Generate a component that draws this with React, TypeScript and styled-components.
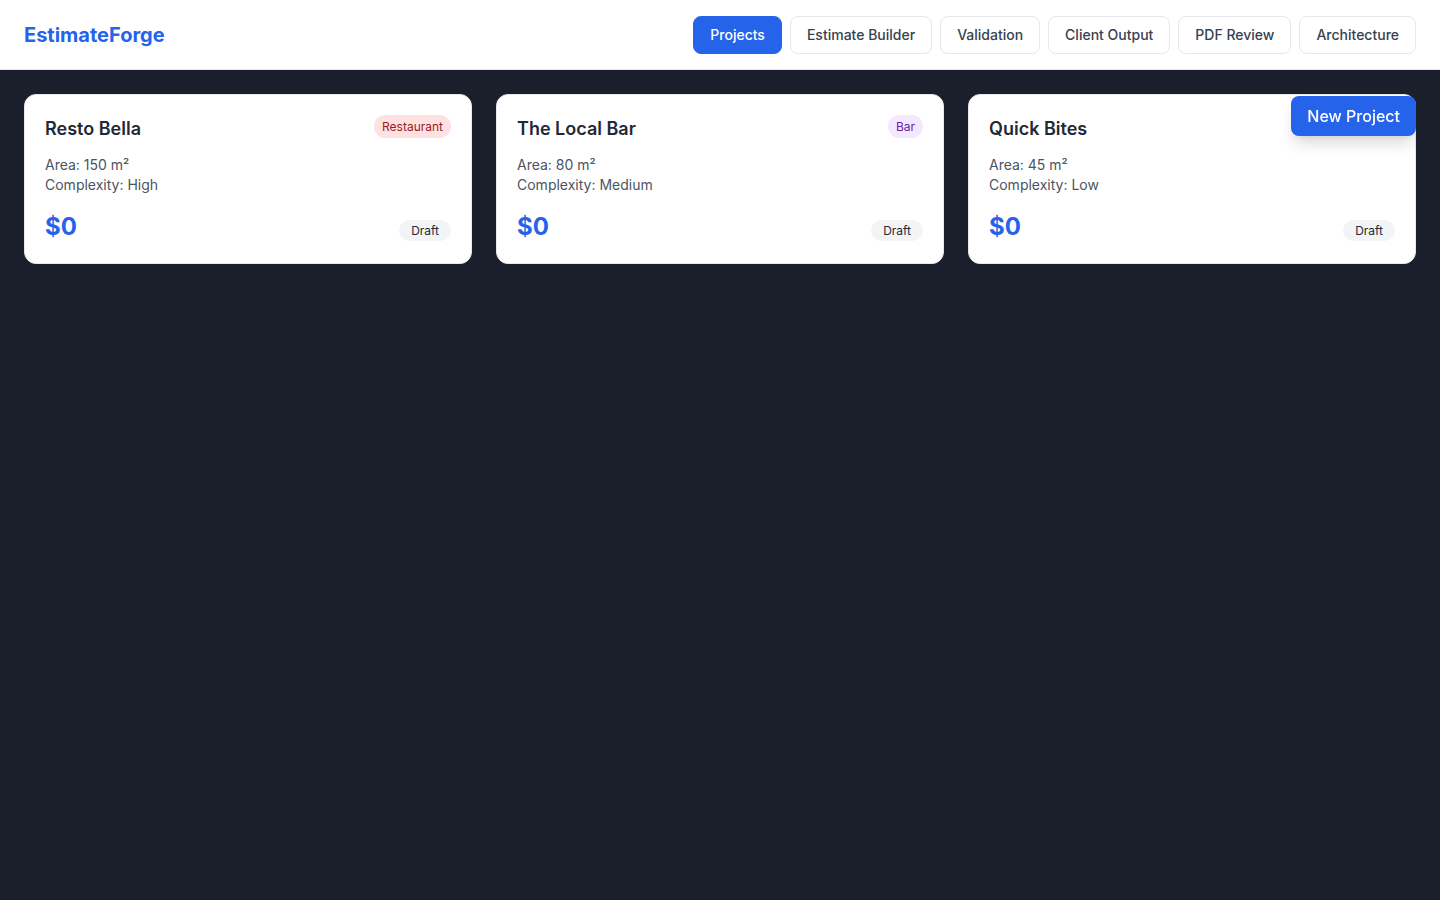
import React from 'react';
import styled, { createGlobalStyle } from 'styled-components';

const GlobalStyle = createGlobalStyle`
  html, body {
    margin: 0;
    padding: 0;
    background-color: #1b1f2c;
    font-family: Inter, "Noto Sans", sans-serif;
    -webkit-font-smoothing: antialiased;
  }
  #root {
    min-height: 100vh;
  }
  * {
    box-sizing: border-box;
  }
`;

const Page = styled.div`
  min-height: 100vh;
  background-color: #1b1f2c;
`;

const Header = styled.header`
  height: 70px;
  background: #ffffff;
  display: flex;
  align-items: center;
  justify-content: space-between;
  padding: 0 24px;
  border-bottom: 1px solid #e5e7eb;
`;

const Logo = styled.div`
  font-size: 20px;
  font-weight: 700;
  color: #2563eb;
`;

const Nav = styled.nav`
  display: flex;
  gap: 8px;
`;

const NavButton = styled.button<{ $active?: boolean }>`
  height: 38px;
  padding: 0 16px;
  border-radius: 8px;
  font-family: inherit;
  font-size: 14px;
  font-weight: 500;
  cursor: pointer;
  border: 1px solid ${p => (p.$active ? '#2563eb' : '#e5e7eb')};
  background: ${p => (p.$active ? '#2563eb' : '#ffffff')};
  color: ${p => (p.$active ? '#ffffff' : '#374151')};
`;

const Grid = styled.main`
  display: grid;
  grid-template-columns: repeat(3, 1fr);
  gap: 24px;
  padding: 24px;
`;

const Card = styled.div`
  background: #ffffff;
  border: 1px solid #e5e7eb;
  border-radius: 12px;
  padding: 20px;
  height: 170px;
`;

const TitleRow = styled.div`
  display: flex;
  justify-content: space-between;
  align-items: flex-start;
  margin-bottom: 12px;
`;

const Title = styled.h3`
  margin: 0;
  font-size: 18px;
  line-height: 28px;
  font-weight: 600;
  color: #1f2937;
`;

const Tag = styled.span<{ $bg: string; $fg: string }>`
  display: inline-block;
  padding: 3px 8px;
  border-radius: 999px;
  font-size: 12px;
  line-height: 17px;
  font-weight: 400;
  background: ${p => p.$bg};
  color: ${p => p.$fg};
`;

const Meta = styled.div`
  font-size: 14px;
  line-height: 20px;
  color: #4b5563;
`;

const PriceRow = styled.div`
  display: flex;
  justify-content: space-between;
  align-items: flex-end;
  margin-top: 16px;
`;

const Price = styled.div`
  font-size: 24px;
  line-height: 32px;
  font-weight: 700;
  color: #2563eb;
`;

const Status = styled.span`
  padding: 3px 12px;
  border-radius: 999px;
  font-size: 12px;
  line-height: 15px;
  margin-bottom: 2px;
  background: #f3f4f6;
  color: #1f2937;
`;

const NewProject = styled.button`
  position: fixed;
  top: 96px;
  right: 24px;
  height: 40px;
  padding: 0 16px;
  border: none;
  border-radius: 8px;
  background: #2563eb;
  color: #ffffff;
  font-family: inherit;
  font-size: 16px;
  font-weight: 500;
  cursor: pointer;
  box-shadow: 0 10px 15px -3px rgba(0, 0, 0, 0.15), 0 4px 6px -4px rgba(0, 0, 0, 0.1);
`;

const tabs = ['Projects', 'Estimate Builder', 'Validation', 'Client Output', 'PDF Review', 'Architecture'];

type Project = {
  name: string;
  type?: { label: string; bg: string; fg: string };
  area: number;
  complexity: string;
};

const projects: Project[] = [
  { name: 'Resto Bella', type: { label: 'Restaurant', bg: '#fee2e2', fg: '#991b1b' }, area: 150, complexity: 'High' },
  { name: 'The Local Bar', type: { label: 'Bar', bg: '#f3e8ff', fg: '#6b21a8' }, area: 80, complexity: 'Medium' },
  { name: 'Quick Bites', area: 45, complexity: 'Low' },
];

export default function App() {
  return (
    <>
      <GlobalStyle />
      <Page>
        <Header>
          <Logo>EstimateForge</Logo>
          <Nav>
            {tabs.map((t, i) => (
              <NavButton key={t} $active={i === 0}>
                {t}
              </NavButton>
            ))}
          </Nav>
        </Header>
        <Grid>
          {projects.map(p => (
            <Card key={p.name}>
              <TitleRow>
                <Title>{p.name}</Title>
                {p.type && (
                  <Tag $bg={p.type.bg} $fg={p.type.fg}>
                    {p.type.label}
                  </Tag>
                )}
              </TitleRow>
              <Meta>Area: {p.area} m²</Meta>
              <Meta>Complexity: {p.complexity}</Meta>
              <PriceRow>
                <Price>$0</Price>
                <Status>Draft</Status>
              </PriceRow>
            </Card>
          ))}
        </Grid>
        <NewProject>New Project</NewProject>
      </Page>
    </>
  );
}
